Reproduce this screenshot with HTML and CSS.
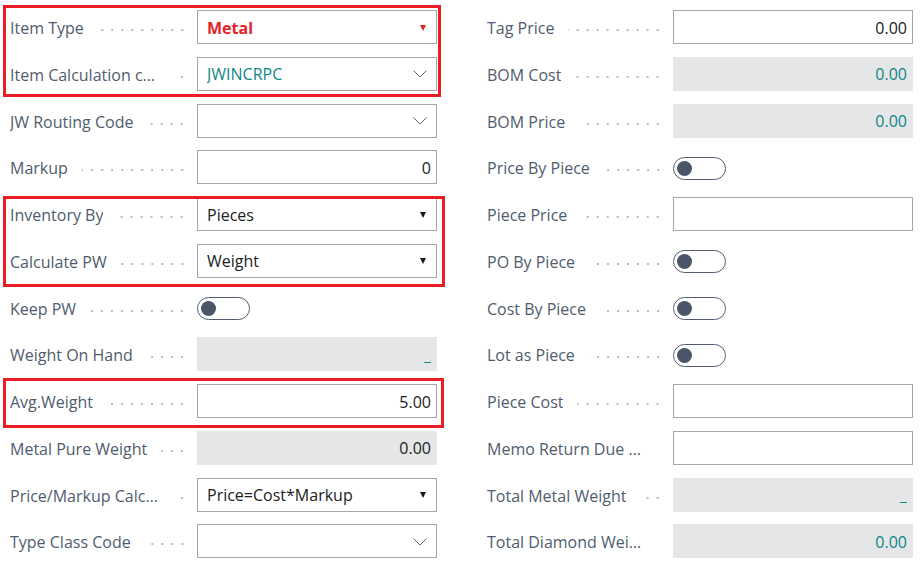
FILE: index.html
```html
<!DOCTYPE html>
<html>
<head>
<meta charset="utf-8">
<link rel="stylesheet" href="styles.css">
</head>
<body>
<div class="page">
  <div class="grid">
    <div class="col">
      <div class="row"><div class="lbl"><span class="txt">Item Type</span><span class="dots"></span></div>
        <div class="field select"><span class="val metal">Metal</span><span class="tri red"></span></div></div>
      <div class="row"><div class="lbl"><span class="txt">Item Calculation code</span><span class="dots"></span></div>
        <div class="field select"><span class="val teal">JWINCRPC</span><svg class="chev" width="14" height="8" viewBox="0 0 14 8"><polyline points="0.5,0.5 7,7 13.5,0.5" fill="none" stroke="#666" stroke-width="1"/></svg></div></div>
      <div class="row"><div class="lbl"><span class="txt">JW Routing Code</span><span class="dots"></span></div>
        <div class="field select"><span class="val"></span><svg class="chev" width="14" height="8" viewBox="0 0 14 8"><polyline points="0.5,0.5 7,7 13.5,0.5" fill="none" stroke="#666" stroke-width="1"/></svg></div></div>
      <div class="row"><div class="lbl"><span class="txt">Markup</span><span class="dots"></span></div>
        <div class="field num"><span class="val">0</span></div></div>
      <div class="row"><div class="lbl"><span class="txt">Inventory By</span><span class="dots"></span></div>
        <div class="field select"><span class="val">Pieces</span><span class="tri"></span></div></div>
      <div class="row"><div class="lbl"><span class="txt">Calculate PW</span><span class="dots"></span></div>
        <div class="field select"><span class="val">Weight</span><span class="tri"></span></div></div>
      <div class="row"><div class="lbl"><span class="txt">Keep PW</span><span class="dots"></span></div>
        <div class="toggle"><span class="knob"></span></div></div>
      <div class="row"><div class="lbl"><span class="txt">Weight On Hand</span><span class="dots"></span></div>
        <div class="field ro num"><span class="val teal">_</span></div></div>
      <div class="row"><div class="lbl"><span class="txt">Avg.Weight</span><span class="dots"></span></div>
        <div class="field num"><span class="val">5.00</span></div></div>
      <div class="row"><div class="lbl"><span class="txt">Metal Pure Weight</span><span class="dots"></span></div>
        <div class="field ro num"><span class="val">0.00</span></div></div>
      <div class="row"><div class="lbl"><span class="txt">Price/Markup Calculation</span><span class="dots"></span></div>
        <div class="field select"><span class="val">Price=Cost*Markup</span><span class="tri"></span></div></div>
      <div class="row"><div class="lbl"><span class="txt">Type Class Code</span><span class="dots"></span></div>
        <div class="field select"><span class="val"></span><svg class="chev" width="14" height="8" viewBox="0 0 14 8"><polyline points="0.5,0.5 7,7 13.5,0.5" fill="none" stroke="#666" stroke-width="1"/></svg></div></div>
    </div>
    <div class="col right">
      <div class="row"><div class="lbl"><span class="txt">Tag Price</span><span class="dots"></span></div>
        <div class="field num"><span class="val">0.00</span></div></div>
      <div class="row"><div class="lbl"><span class="txt">BOM Cost</span><span class="dots"></span></div>
        <div class="field ro num"><span class="val teal">0.00</span></div></div>
      <div class="row"><div class="lbl"><span class="txt">BOM Price</span><span class="dots"></span></div>
        <div class="field ro num"><span class="val teal">0.00</span></div></div>
      <div class="row"><div class="lbl"><span class="txt">Price By Piece</span><span class="dots"></span></div>
        <div class="toggle"><span class="knob"></span></div></div>
      <div class="row"><div class="lbl"><span class="txt">Piece Price</span><span class="dots"></span></div>
        <div class="field num"><span class="val"></span></div></div>
      <div class="row"><div class="lbl"><span class="txt">PO By Piece</span><span class="dots"></span></div>
        <div class="toggle"><span class="knob"></span></div></div>
      <div class="row"><div class="lbl"><span class="txt">Cost By Piece</span><span class="dots"></span></div>
        <div class="toggle"><span class="knob"></span></div></div>
      <div class="row"><div class="lbl"><span class="txt">Lot as Piece</span><span class="dots"></span></div>
        <div class="toggle"><span class="knob"></span></div></div>
      <div class="row"><div class="lbl"><span class="txt">Piece Cost</span><span class="dots"></span></div>
        <div class="field num"><span class="val"></span></div></div>
      <div class="row"><div class="lbl"><span class="txt">Memo Return Due Date</span><span class="dots"></span></div>
        <div class="field num"><span class="val"></span></div></div>
      <div class="row"><div class="lbl"><span class="txt">Total Metal Weight</span><span class="dots"></span></div>
        <div class="field ro num"><span class="val teal">_</span></div></div>
      <div class="row"><div class="lbl"><span class="txt">Total Diamond Weight</span><span class="dots"></span></div>
        <div class="field ro num"><span class="val teal">0.00</span></div></div>
    </div>
  </div>
  <div class="mark m1"></div>
  <div class="mark m2"></div>
  <div class="mark m3"></div>
</div>
</body>
</html>
```

FILE: styles.css
```css
html, body {
  margin: 0;
  padding: 0;
  background: #ffffff;
}
body {
  font-family: "Open Sans", "Noto Sans", sans-serif;
  font-size: 16px;
  color: #212121;
}
.page {
  position: relative;
  width: 923px;
  height: 568px;
  overflow: hidden;
}
.grid {
  display: grid;
  grid-template-columns: 427px 426px;
  column-gap: 50px;
  padding: 10px 0 0 10px;
}
.col {
  display: flex;
  flex-direction: column;
  gap: 12.75px;
}
.row {
  display: flex;
  align-items: center;
  height: 34px;
}
.lbl {
  flex: 0 0 187px;
  min-width: 0;
  display: flex;
  align-items: center;
  align-self: stretch;
  padding-top: 2px;
  box-sizing: border-box;
  color: #505c6d;
}
.right .lbl {
  flex-basis: 186px;
}
.txt {
  flex: 0 1 auto;
  max-width: 152px;
  white-space: nowrap;
  overflow: hidden;
  text-overflow: ellipsis;
}
.right .txt {
  max-width: 160px;
}
.dots {
  flex: 1 1 0;
  min-width: 0;
  align-self: stretch;
  margin: 0 10px 0 14px;
  background-image: radial-gradient(circle at center, #b9bcc2 0.9px, rgba(255,255,255,0) 1.4px);
  background-size: 10px 6px;
  background-repeat: repeat-x;
  background-position: right top 15px;
}
.field {
  flex: 0 0 240px;
  box-sizing: border-box;
  height: 34px;
  border: 1px solid #a6a6a6;
  background: #fff;
  display: flex;
  align-items: center;
  padding: 1px 9px 0 9px;
}
.field .val {
  flex: 1 1 auto;
  white-space: nowrap;
  overflow: hidden;
}
.field.num .val {
  text-align: right;
}
.field.num {
  padding-right: 5px;
}
.field.ro {
  border-color: #e5e6e8;
  background: #e5e6e8;
}
.teal {
  color: #0f8585;
}
.metal {
  color: #e4222a;
  font-weight: 700;
}
.tri {
  flex: 0 0 auto;
  width: 0;
  height: 0;
  border-left: 3.5px solid transparent;
  border-right: 3.5px solid transparent;
  border-top: 6px solid #1a1a1a;
  margin-right: 1px;
}
.tri.red {
  border-top-color: #e4222a;
}
.chev {
  flex: 0 0 auto;
  display: block;
}
.toggle {
  flex: 0 0 auto;
  box-sizing: border-box;
  width: 53px;
  height: 23px;
  border: 1px solid #505c6d;
  border-radius: 12px;
  display: flex;
  align-items: center;
  padding-left: 3px;
  margin-top: 2px;
}
.knob {
  width: 15px;
  height: 15px;
  border-radius: 50%;
  background: #4b5568;
}
.mark {
  position: absolute;
  box-sizing: border-box;
  border: 3px solid #ea1c24;
}
.m1 { left: 3px; top: 5px; width: 438px; height: 92px; }
.m2 { left: 3px; top: 196px; width: 442px; height: 91px; }
.m3 { left: 3px; top: 378px; width: 441px; height: 50px; }
```
